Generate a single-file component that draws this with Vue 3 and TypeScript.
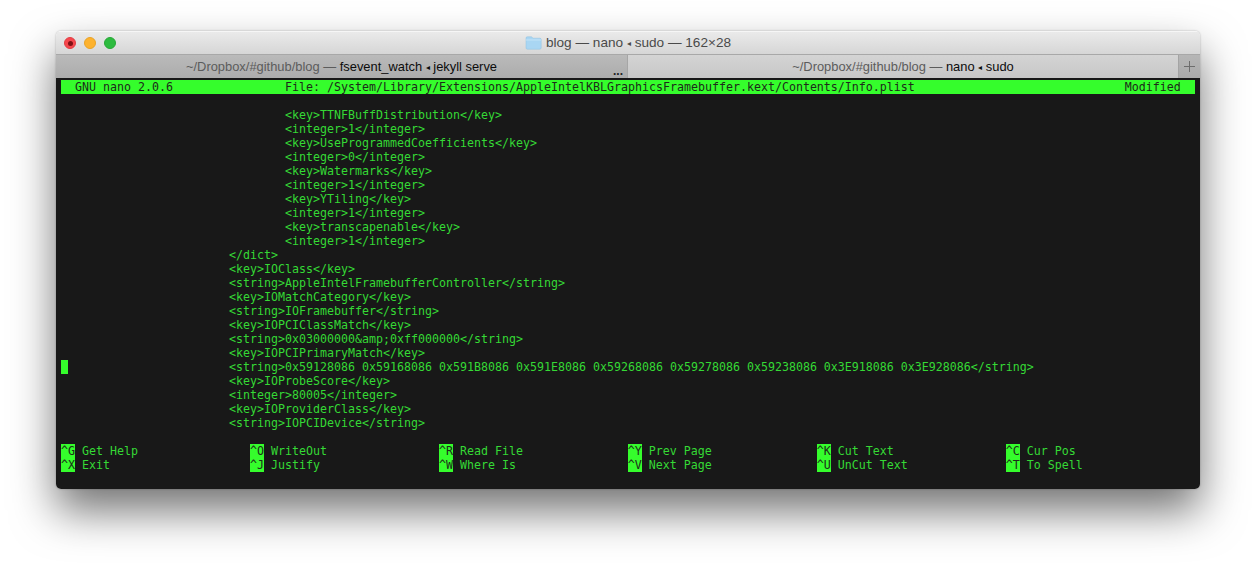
<script setup lang="ts">
const statusBar: string =
  '  GNU nano 2.0.6'.padEnd(32) +
  'File: /System/Library/Extensions/AppleIntelKBLGraphicsFramebuffer.kext/Contents/Info.plist'.padEnd(120) +
  'Modified  '

const deep = ' '.repeat(32)
const mid = ' '.repeat(24)

const lines: string[] = [
  '',
  deep + '<key>TTNFBuffDistribution</key>',
  deep + '<integer>1</integer>',
  deep + '<key>UseProgrammedCoefficients</key>',
  deep + '<integer>0</integer>',
  deep + '<key>Watermarks</key>',
  deep + '<integer>1</integer>',
  deep + '<key>YTiling</key>',
  deep + '<integer>1</integer>',
  deep + '<key>transcapenable</key>',
  deep + '<integer>1</integer>',
  mid + '</dict>',
  mid + '<key>IOClass</key>',
  mid + '<string>AppleIntelFramebufferController</string>',
  mid + '<key>IOMatchCategory</key>',
  mid + '<string>IOFramebuffer</string>',
  mid + '<key>IOPCIClassMatch</key>',
  mid + '<string>0x03000000&amp;0xff000000</string>',
  mid + '<key>IOPCIPrimaryMatch</key>',
]
const cursorLine: string =
  ' '.repeat(23) +
  '<string>0x59128086 0x59168086 0x591B8086 0x591E8086 0x59268086 0x59278086 0x59238086 0x3E918086 0x3E928086</string>'
const tail: string[] = [
  mid + '<key>IOProbeScore</key>',
  mid + '<integer>80005</integer>',
  mid + '<key>IOProviderClass</key>',
  mid + '<string>IOPCIDevice</string>',
  '',
]

const shortcuts: [string, string][] = [
  ['^G', 'Get Help'], ['^O', 'WriteOut'], ['^R', 'Read File'], ['^Y', 'Prev Page'], ['^K', 'Cut Text'], ['^C', 'Cur Pos'],
  ['^X', 'Exit'], ['^J', 'Justify'], ['^W', 'Where Is'], ['^V', 'Next Page'], ['^U', 'UnCut Text'], ['^T', 'To Spell'],
]
const blank = ' '
</script>

<template>
  <div class="stage">
    <div class="window">
      <header class="titlebar">
        <span class="lights">
          <span class="light red"><span class="dot"></span></span>
          <span class="light yellow"></span>
          <span class="light green"></span>
        </span>
        <svg class="folder" width="17" height="14" viewBox="0 0 17 14">
          <path d="M1 2.2C1 1.3 1.5.8 2.4.8h3.7c.6 0 .9.2 1.2.6l.6.8h6.9c.9 0 1.4.5 1.4 1.4v8.2c0 .9-.5 1.4-1.4 1.4H2.4c-.9 0-1.4-.5-1.4-1.4z" fill="#a9d6f3" stroke="#8fc0e0" stroke-width=".5" />
          <path d="M1 4h15" stroke="#c4e4f8" stroke-width="1" />
        </svg>
        <span class="title">blog — nano <span class="sep">◂</span> sudo — 162×28</span>
      </header>

      <nav class="tabs">
        <div class="tab inactive">
          <span><span class="path">~/Dropbox/#github/blog — </span><span class="proc">fsevent_watch <span class="sep">◂</span> jekyll serve</span></span>
          <span class="more">...</span>
        </div>
        <div class="tab active">
          <span><span class="path">~/Dropbox/#github/blog — </span><span class="proc">nano <span class="sep">◂</span> sudo</span></span>
        </div>
        <div class="add">
          <svg width="13" height="13" viewBox="0 0 13 13"><path d="M6.5 1v11M1 6.5h11" stroke="#6d6d6d" stroke-width="1" /></svg>
        </div>
      </nav>

      <main class="term">
        <div class="row bar">{{ statusBar }}</div>
        <div v-for="(l, i) in lines" :key="'a' + i" class="row">{{ l }}</div>
        <div class="row"><span class="cursor">{{ blank }}</span>{{ cursorLine }}</div>
        <div v-for="(l, i) in tail" :key="'b' + i" class="row">{{ l }}</div>
        <div class="keys">
          <div v-for="s in shortcuts" :key="s[0]" class="row"><span class="key">{{ s[0] }}</span>{{ blank + s[1] }}</div>
        </div>
      </main>
    </div>
  </div>
</template>

<style>
html, body { margin: 0; background: #fff; }
</style>

<style scoped>
.stage {
  height: 570px;
  box-sizing: border-box;
  padding: 31px 56px 0;
  overflow: hidden;
}
.window {
  height: 458px;
  border-radius: 5px;
  overflow: hidden;
  display: flex;
  flex-direction: column;
  box-shadow: 0 22px 44px rgba(0, 0, 0, 0.55), 0 0 2px rgba(0, 0, 0, 0.3);
  font-family: "Liberation Sans", Arial, sans-serif;
}
.titlebar {
  height: 23px;
  flex: none;
  display: flex;
  align-items: center;
  justify-content: center;
  gap: 4px;
  position: relative;
  background: linear-gradient(#ebebeb, #d6d6d6);
  box-shadow: inset 0 1px 0 #f6f6f6;
  font-size: 13.6px;
  color: #4a4a4a;
}
.sep { font-size: 0.62em; vertical-align: 1px; }
.lights {
  position: absolute;
  left: 8px;
  top: 6px;
  display: flex;
  gap: 8px;
}
.light {
  width: 12px;
  height: 12px;
  border-radius: 50%;
  display: flex;
  align-items: center;
  justify-content: center;
  box-sizing: border-box;
}
.red { background: #f6474d; border: 1px solid #e23e43; }
.dot { width: 5px; height: 5px; border-radius: 50%; background: #7e1014; }
.yellow { background: #fdb22e; border: 1px solid #e9a326; }
.green { background: #2dbb3f; border: 1px solid #27a836; }
.tabs {
  height: 24px;
  flex: none;
  display: flex;
  border-top: 1px solid #a8a8a8;
  box-sizing: border-box;
  font-size: 12.9px;
  background: #a6a6a6;
}
.tab {
  display: flex;
  align-items: center;
  justify-content: center;
  position: relative;
  box-sizing: border-box;
}
.inactive {
  width: 571px;
  background: linear-gradient(#bababa, #acacac);
}
.active {
  width: 551px;
  margin-left: 1px;
  background: linear-gradient(#d4d4d4, #c7c7c7);
  border-right: 1px solid #a4a4a4;
}
.path { color: #5c5c5c; }
.proc { color: #0c0c0c; }
.more {
  position: absolute;
  right: 4px;
  bottom: 2px;
  font-size: 12px;
  font-weight: bold;
  line-height: 10px;
  color: #222;
}
.add {
  width: 21px;
  background: linear-gradient(#b6b6b6, #aaaaaa);
  display: flex;
  align-items: center;
  justify-content: center;
}
.term {
  flex: 1;
  background: #181818;
  padding: 2px 0 0 5px;
  font-family: "DejaVu Sans Mono", monospace;
  font-size: 11.63px;
  line-height: 14px;
  color: #35d935;
}
.row {
  height: 14px;
  white-space: pre;
}
.bar {
  width: 162ch;
  background: #35fd2c;
  color: #1d2a1a;
}
.cursor {
  background: #35fd2c;
}
.keys {
  display: grid;
  grid-template-columns: repeat(6, 27ch);
}
.key {
  background: #35fd2c;
  color: #1d2a1a;
}
</style>
